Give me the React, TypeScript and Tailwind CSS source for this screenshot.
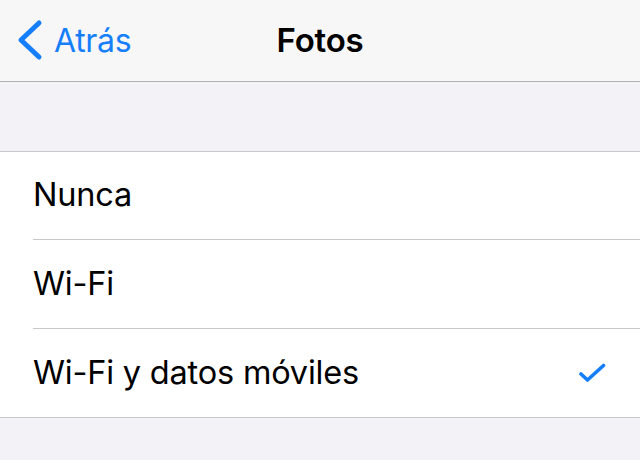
import React, { useState } from 'react';

const options = [
  { label: 'Nunca', h: 'h-[88px]' },
  { label: 'Wi-Fi', h: 'h-[89px]' },
  { label: 'Wi-Fi y datos móviles', h: 'h-[88px]' },
];

const App: React.FC = () => {
  const [selected, setSelected] = useState(2);

  return (
    <div
      className="w-[640px] h-[460px] bg-[#f2f2f7] overflow-hidden"
      style={{ fontFamily: 'Inter, "Liberation Sans", sans-serif' }}
    >
      {/* Barra de navegación */}
      <div className="h-[82px] bg-[#f7f7f7] border-b border-[#b2b2b2] grid grid-cols-[1fr_auto_1fr] items-center">
        <button className="flex items-center pl-[15px] text-[#157efb] text-[32px] leading-none tracking-[-0.3px]">
          <svg width="28" height="42" viewBox="0 0 28 42" className="mr-[11px] -mt-[2px]">
            <path d="M24 4 L6 21 L24 38" fill="none" stroke="#157efb" strokeWidth="5" strokeLinecap="round" strokeLinejoin="round" />
          </svg>
          Atrás
        </button>
        <h1 className="text-[33px] font-semibold text-black leading-none tracking-[-0.2px]">Fotos</h1>
        <div />
      </div>

      <div className="h-[70px] border-b border-[#c8c7cc]" />

      {/* Lista de opciones */}
      <div className="bg-white border-b border-[#c8c7cc] pl-[33px]">
        {options.map((opt, i) => (
          <div
            key={opt.label}
            onClick={() => setSelected(i)}
            className={`${opt.h} flex items-center justify-between pr-[34px] text-[32.5px] text-black tracking-[-0.2px] ${
              i < options.length - 1 ? 'border-b border-[#c8c7cc]' : ''
            }`}
          >
            <span>{opt.label}</span>
            {selected === i && (
              <svg width="27" height="20" viewBox="0 0 27 20">
                <path d="M2 11 L8.5 17 L24.5 2.5" fill="none" stroke="#157efb" strokeWidth="3.6" strokeLinecap="round" strokeLinejoin="round" />
              </svg>
            )}
          </div>
        ))}
      </div>
    </div>
  );
};

export default App;
